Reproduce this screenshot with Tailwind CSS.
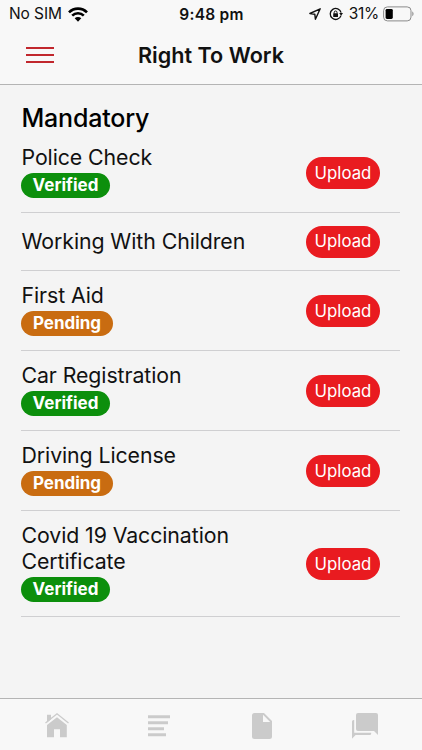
<!DOCTYPE html>
<html lang="en">
<head>
  <meta charset="UTF-8" />
  <meta name="viewport" content="width=device-width, initial-scale=1.0"/>
  <title>Right To Work</title>
  <script src="https://cdn.jsdelivr.net/npm/@tailwindcss/browser@4"></script>
</head>
<body class="h-[750px] flex flex-col overflow-hidden bg-[#f4f4f4] font-['Inter',sans-serif] text-[#111] antialiased">

  <!-- Status bar + header -->
  <header class="h-[85px] shrink-0 bg-[#f8f8f8] border-b border-[#b4b4b4]">
    <div class="grid grid-cols-[1fr_auto_1fr] items-center h-7 pl-[9px] pr-2 leading-none">
      <div class="flex items-center gap-[6px]">
        <span class="text-[15.5px] tracking-[-0.1px] whitespace-nowrap">No SIM</span>
        <svg class="w-5 h-[15px]" viewBox="0 0 20 15" fill="none" stroke="#000" stroke-width="2.6">
          <path d="M1 5.4a12.6 12.6 0 0 1 18 0"/>
          <path d="M4.2 8.7a8.2 8.2 0 0 1 11.6 0"/>
          <path d="M6.7 11.3a4.7 4.7 0 0 1 6.6 0L10 14.8z" fill="#000" stroke="none"/>
        </svg>
      </div>
      <span class="text-[15.5px] font-semibold tracking-[0.25px] pt-px">9:48 pm</span>
      <div class="flex items-center justify-end">
        <svg class="w-3 h-3 mr-2" viewBox="0 0 12 12" fill="none" stroke="#111" stroke-width="1.4" stroke-linejoin="round">
          <path d="M11.2.8.9 5.5l4.9.7.6 5z"/>
        </svg>
        <svg class="w-[14px] h-[14px] mr-[6px]" viewBox="0 0 14 14" fill="none" stroke="#111" stroke-width="1.3">
          <path d="M12 8.6A5.5 5.5 0 1 1 12.1 5.7"/>
          <path d="M10.2 6h3.8l-1.9 2.7z" fill="#111" stroke="none"/>
          <rect x="4.2" y="6.3" width="4.8" height="3.6" rx=".5" fill="#111" stroke="none"/>
          <path d="M5.2 6.5V5.4a1.4 1.4 0 0 1 2.8 0v1.1" stroke-width="1"/>
        </svg>
        <span class="text-[15.5px] tracking-[-0.3px] mr-1">31%</span>
        <svg class="w-[31px] h-4" viewBox="0 0 31 16">
          <rect x=".6" y=".9" width="27.4" height="14" rx="3.8" fill="none" stroke="#8b8b8b"/>
          <rect x="2.6" y="2.9" width="7.2" height="10" rx="1.4"/>
          <path d="M29.3 5.6c1.6.6 1.6 4 0 4.6z" fill="#8b8b8b"/>
        </svg>
      </div>
    </div>
    <div class="relative flex items-center justify-center h-[54px]">
      <button class="absolute left-[26px] top-[19px] flex flex-col gap-[5px]" aria-label="Menu">
        <span class="w-7 h-[2px] bg-[#c1272d]"></span>
        <span class="w-7 h-[2px] bg-[#c1272d]"></span>
        <span class="w-7 h-[2px] bg-[#c1272d]"></span>
      </button>
      <h1 class="text-[21.6px] font-semibold">Right To Work</h1>
    </div>
  </header>

  <!-- Documents -->
  <main class="flex-1 pl-[21px] pr-[22px] pt-[18px]">
    <h2 class="text-[25px] leading-[31px] font-medium tracking-[-0.2px] text-black pl-[0.5px]">Mandatory</h2>
    <ul id="documents" class="-mt-px"></ul>
  </main>

  <!-- Tab bar -->
  <nav class="h-[52px] shrink-0 bg-[#f8f8f8] border-t border-[#b4b4b4] grid grid-cols-[114px_90px_115px_1fr] text-[#cbcbcb]">
    <a class="flex justify-center pt-[13px]">
      <svg class="w-6 h-[26px]" viewBox="0 0 24 26" fill="currentColor">
        <path d="M12 5.2 21.8 13v12.2H15v-8H9v8H2V13z"/>
        <path d="M2 2.8h4v4.4l-4 3.2z"/>
        <path d="M.5 11 12 1.8 23.5 11" fill="none" stroke="currentColor" stroke-width="1.3"/>
      </svg>
    </a>
    <a class="flex justify-center pt-4">
      <svg class="w-[22px] h-[22px]" viewBox="0 0 22 22" fill="currentColor">
        <path d="M0 .3h22v3H0zM0 6.3h20v3H0zM0 12.3h16v3H0zM0 18.3h18v3H0z"/>
      </svg>
    </a>
    <a class="flex justify-center pt-[14px]">
      <svg class="w-5 h-[26px]" viewBox="0 0 20 26" fill="currentColor">
        <path d="M2.5 0H12l8 8v15.5a2.5 2.5 0 0 1-2.5 2.5h-15A2.5 2.5 0 0 1 0 23.5v-21A2.5 2.5 0 0 1 2.5 0zM11 1.8V9h7.2z" fill-rule="evenodd"/>
      </svg>
    </a>
    <a class="flex pl-[33px] pt-[14px]">
      <svg class="w-[26px] h-[26px]" viewBox="0 0 26 26" fill="currentColor">
        <path d="M6 0h18a2 2 0 0 1 2 2v20l-4-4H6a2 2 0 0 1-2-2V2a2 2 0 0 1 2-2z"/>
        <path d="M2.2 7v12.8h17v.7a1.6 1.6 0 0 1-1.6 1.6H3.6L0 25.7V8.6A1.6 1.6 0 0 1 1.6 7z"/>
      </svg>
    </a>
  </nav>

  <script>
    const documents = [
      { name: "Police Check", status: "Verified" },
      { name: "Working With Children", status: null },
      { name: "First Aid", status: "Pending" },
      { name: "Car Registration", status: "Verified" },
      { name: "Driving License", status: "Pending" },
      { name: "Covid 19 Vaccination Certificate", status: "Verified" },
    ];

    const badgeColors = {
      Verified: "bg-[#0c8f0c] w-[89px]",
      Pending: "bg-[#c96c11] w-[92px]",
    };

    document.getElementById("documents").innerHTML = documents.map(doc => `
      <li class="flex items-center justify-between border-b border-[#cfcfd1] pr-[20px] ${doc.status ? "pt-[11px] pb-[14px]" : "h-[58px]"}">
        <div class="w-[240px]">
          <div class="text-[21.3px] leading-[26.4px] tracking-[-0.08px] pl-[0.5px]">${doc.name}</div>
          ${doc.status ? `<div class="mt-[2.6px] h-[25px] rounded-full text-center text-[17px] leading-[25px] font-bold text-white ${badgeColors[doc.status]}">${doc.status}</div>` : ""}
        </div>
        <button class="w-[74px] h-8 pt-px rounded-full bg-[#e91b20] text-white text-[16.8px] ${doc.status ? "mt-[4px]" : ""}">Upload</button>
      </li>
    `).join("");
  </script>

</body>
</html>
